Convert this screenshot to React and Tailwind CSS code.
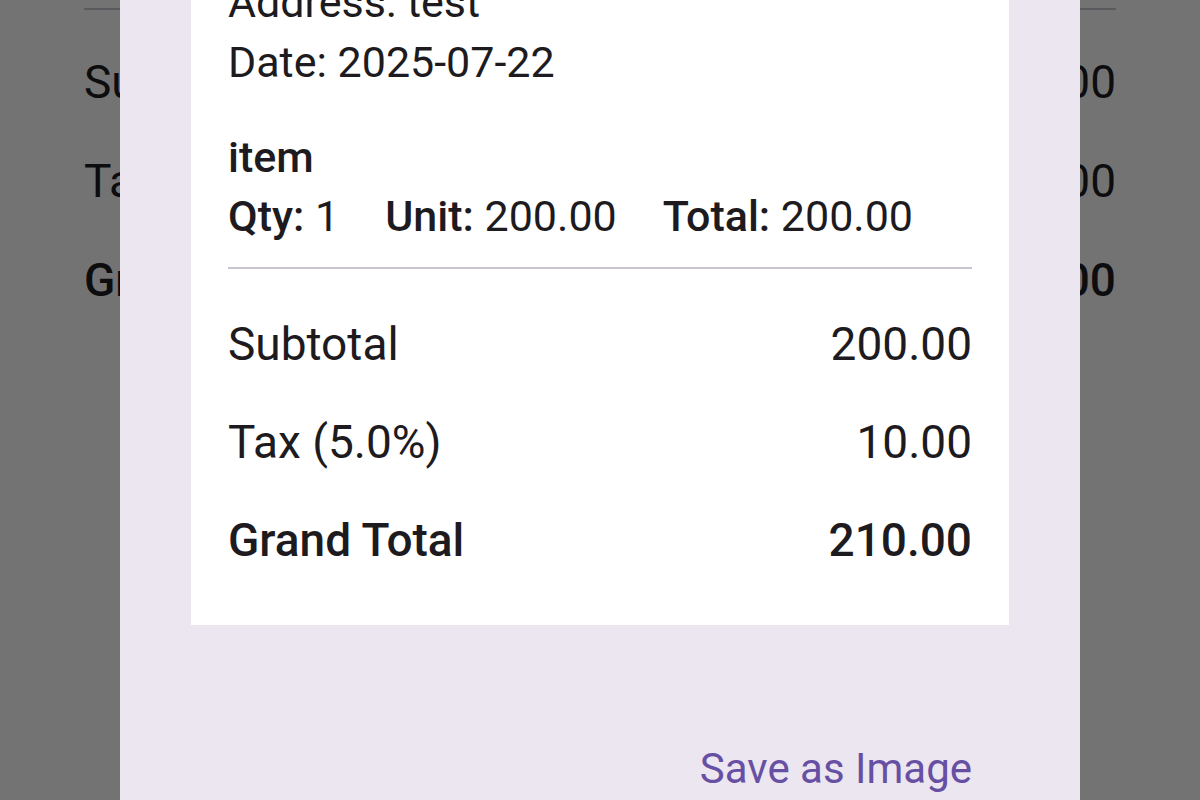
import React from "react";

export default function App() {
  const font = { fontFamily: "Roboto, 'Noto Sans', sans-serif" };
  return (
    <div className="relative w-[1200px] h-[800px] overflow-hidden bg-white text-[#1D1B20]" style={font}>
      {/* background page */}
      <div className="px-[84px]">
        <div className="mt-[8px] h-[2px] bg-[#CAC4D0]" />
        <div className="mt-[45px] flex flex-col gap-[45px] text-[46px] leading-[54px]">
          <div className="flex justify-between">
            <span>Subtotal</span>
            <span>200.00</span>
          </div>
          <div className="flex justify-between">
            <span>Tax (5.0%)</span>
            <span>10.00</span>
          </div>
          <div className="flex justify-between font-medium">
            <span>Grand Total</span>
            <span>210.00</span>
          </div>
        </div>
      </div>

      {/* scrim */}
      <div className="absolute inset-0 bg-black/55" />

      {/* dialog */}
      <div className="absolute top-0 bottom-0 left-[120px] w-[960px] bg-[#ECE6F0] px-[71px] flex flex-col">
        <div className="-mt-[28px] bg-white px-[37px] pb-[58px]">
          <div className="text-[43px] leading-[60px]">Address: test</div>
          <div className="text-[43px] leading-[60px]">Date: 2025-07-22</div>
          <div className="mt-[41px] text-[43px] leading-[48px] font-medium">item</div>
          <div className="mt-[11px] flex gap-[46px] text-[43px] leading-[48px]">
            <span><span className="font-medium">Qty:</span> 1</span>
            <span><span className="font-medium">Unit:</span> 200.00</span>
            <span><span className="font-medium">Total:</span> 200.00</span>
          </div>
          <div className="mt-[27px] h-[2px] bg-[#CAC4D0]" />
          <div className="mt-[48px] flex flex-col gap-[44px] text-[46px] leading-[54px]">
            <div className="flex justify-between">
              <span>Subtotal</span>
              <span>200.00</span>
            </div>
            <div className="flex justify-between">
              <span>Tax (5.0%)</span>
              <span>10.00</span>
            </div>
            <div className="flex justify-between font-medium">
              <span>Grand Total</span>
              <span>210.00</span>
            </div>
          </div>
        </div>
        <div className="mt-[120px] flex justify-end pr-[37px]">
          <span className="text-[42px] leading-[48px] text-[#6750A4]">Save as Image</span>
        </div>
      </div>
    </div>
  );
}
